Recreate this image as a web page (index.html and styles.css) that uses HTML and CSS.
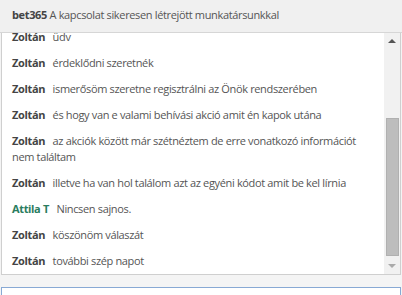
FILE: index.html
```html
<!DOCTYPE html>
<html lang="hu">
<head>
  <meta charset="UTF-8">
  <title>bet365 chat</title>
  <link rel="stylesheet" href="styles.css">
</head>
<body>

  <!-- Header -->
  <div class="chat-header">
    <b>bet365</b> A kapcsolat sikeresen létrejött munkatársunkkal
  </div>

  <!-- Messages -->
  <div class="chat-box">
    <div class="messages">
      <div class="msg"><span class="name">Zoltán</span> üdv</div>
      <div class="msg"><span class="name">Zoltán</span> érdeklődni szeretnék</div>
      <div class="msg"><span class="name">Zoltán</span> ismerősöm szeretne regisztrálni az Önök rendszerében</div>
      <div class="msg"><span class="name">Zoltán</span> és hogy van e valami behívási akció amit én kapok utána</div>
      <div class="msg"><span class="name">Zoltán</span> az akciók között már szétnéztem de erre vonatkozó információt nem találtam</div>
      <div class="msg"><span class="name">Zoltán</span> illetve ha van hol találom azt az egyéni kódot amit be kel lírnia</div>
      <div class="msg"><span class="name agent">Attila T</span> Nincsen sajnos.</div>
      <div class="msg"><span class="name">Zoltán</span> köszönöm válaszát</div>
      <div class="msg"><span class="name">Zoltán</span> további szép napot</div>
    </div>
    <div class="scrollbar">
      <div class="arrow up"></div>
      <div class="track">
        <div class="thumb"></div>
      </div>
      <div class="arrow down"></div>
    </div>
  </div>

  <!-- Input -->
  <div class="chat-footer">
    <div class="chat-input"></div>
  </div>

</body>
</html>
```

FILE: styles.css
```css
/* General Styles */
body {
  margin: 0;
  padding: 0;
  font-family: 'Open Sans', sans-serif;
  font-size: 11px;
  letter-spacing: -0.35px;
  color: #555;
  background: #f4f4f4;
  overflow: hidden;
}

/* Header */
.chat-header {
  height: 32px;
  line-height: 30px;
  padding-left: 12px;
  background: #f0f0f0;
  border-bottom: 1px solid #d6d6d6;
  color: #555;
  white-space: nowrap;
}

.chat-header b {
  color: #444;
}

/* Message box */
.chat-box {
  display: flex;
  height: 241px;
  margin: 0 1px;
  background: #fff;
  border: 1px solid #cfcfcf;
  border-top: none;
}

.messages {
  flex: 1;
  overflow: hidden;
  padding: 0 12px 0 10px;
}

.msg {
  line-height: 16px;
  margin-bottom: 10px;
}

.msg:first-child {
  margin-top: -4px;
}

.name {
  font-weight: bold;
  color: #444;
  margin-right: 5px;
}

.name.agent {
  color: #2a7d5f;
}

/* Scrollbar */
.scrollbar {
  width: 16px;
  display: flex;
  flex-direction: column;
  background: #f1f1f1;
}

.arrow {
  height: 16px;
  display: flex;
  align-items: center;
  justify-content: center;
}

.arrow.up::before {
  content: "";
  border-left: 4px solid transparent;
  border-right: 4px solid transparent;
  border-bottom: 4px solid #555;
}

.arrow.down::before {
  content: "";
  border-left: 4px solid transparent;
  border-right: 4px solid transparent;
  border-top: 4px solid #aaa;
}

.track {
  flex: 1;
  padding: 69px 1px 0 2px;
}

.thumb {
  height: 138px;
  background: #bdbdbd;
  border: 1px solid #b0b0b0;
  box-sizing: border-box;
}

/* Input */
.chat-footer {
  padding: 12px 1px 0;
}

.chat-input {
  height: 30px;
  background: #fff;
  border: 1px solid #88a9d4;
}
```
